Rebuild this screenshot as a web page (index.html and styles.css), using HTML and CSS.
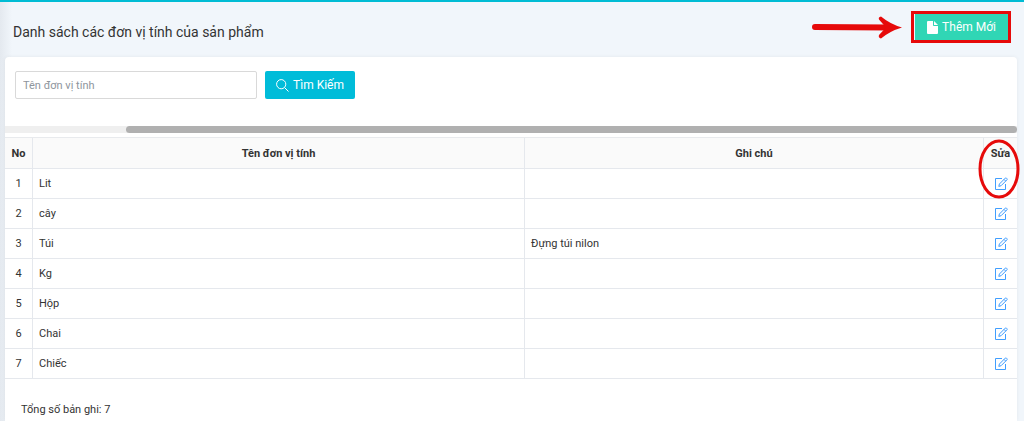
FILE: index.html
```
<!DOCTYPE html>
<html lang="vi">
<head>
  <meta charset="UTF-8">
  <meta name="viewport" content="width=device-width, initial-scale=1.0">
  <title>Đơn vị tính</title>
  <link rel="stylesheet" href="styles.css">
</head>
<body>
  <!-- Shared pencil icon for the edit links -->
  <svg class="icon-defs" aria-hidden="true">
    <symbol id="icon-edit" viewBox="0 0 14 14">
      <path d="M8 1.5H1.5V12.5H11.5V7" />
      <path d="M4.8 9.4L5.4 7L11.3 1.1Q11.9 0.6 12.5 1.2L13 1.7Q13.5 2.3 12.9 2.9L7.1 8.7L4.8 9.4Z" />
      <path d="M10 2.4L11.7 4.1" />
    </symbol>
  </svg>

  <!-- Page title and add button -->
  <header class="page-header">
    <h1>Danh sách các đơn vị tính của sản phẩm</h1>
    <div class="header-actions">
      <svg class="arrow" viewBox="0 0 90 24" aria-hidden="true">
        <path class="arrow-line" d="M3 12L76 12.5" />
        <path class="arrow-head" d="M69 1.5Q78 9 90 12.5Q78 16 69 23.5Q66 22.5 67 20L74 12.5L67 4.5Q66 2 69 1.5Z" />
      </svg>
      <span class="highlight">
        <button type="button" class="btn btn-add">
          <svg class="icon-file" viewBox="0 0 11 13" aria-hidden="true">
            <path d="M1 0H6V4.2Q6 5 6.8 5H11V12Q11 13 10 13H1Q0 13 0 12V1Q0 0 1 0ZM7 0L11 4H7Z" />
          </svg>
          Thêm Mới
        </button>
      </span>
    </div>
  </header>

  <main class="card">
    <!-- Search form -->
    <form class="search-form">
      <input type="text" class="search-input" placeholder="Tên đơn vị tính" aria-label="Tên đơn vị tính">
      <button type="button" class="btn btn-search">
        <svg class="icon-search" viewBox="0 0 13 13" aria-hidden="true">
          <circle cx="5.2" cy="5.2" r="4.6" />
          <path d="M8.5 8.5L12.5 12.5" />
        </svg>
        Tìm Kiếm
      </button>
    </form>

    <!-- Horizontal scroll bar above the table -->
    <div class="scroll-track">
      <div class="scroll-thumb"></div>
    </div>

    <table class="unit-table">
      <thead>
        <tr>
          <th class="col-no">No</th>
          <th class="col-name">Tên đơn vị tính</th>
          <th>Ghi chú</th>
          <th class="col-edit">Sửa
            <svg class="circle-mark" viewBox="0 0 42 60" aria-hidden="true">
              <ellipse cx="21" cy="30" rx="19" ry="28" />
            </svg>
          </th>
        </tr>
      </thead>
      <tbody>
        <tr>
          <td class="col-no">1</td><td>Lit</td><td></td>
          <td class="col-edit"><a href="#" aria-label="Sửa Lit"><svg class="icon-edit"><use href="#icon-edit" /></svg></a></td>
        </tr>
        <tr>
          <td class="col-no">2</td><td>cây</td><td></td>
          <td class="col-edit"><a href="#" aria-label="Sửa cây"><svg class="icon-edit"><use href="#icon-edit" /></svg></a></td>
        </tr>
        <tr>
          <td class="col-no">3</td><td>Túi</td><td>Đựng túi nilon</td>
          <td class="col-edit"><a href="#" aria-label="Sửa Túi"><svg class="icon-edit"><use href="#icon-edit" /></svg></a></td>
        </tr>
        <tr>
          <td class="col-no">4</td><td>Kg</td><td></td>
          <td class="col-edit"><a href="#" aria-label="Sửa Kg"><svg class="icon-edit"><use href="#icon-edit" /></svg></a></td>
        </tr>
        <tr>
          <td class="col-no">5</td><td>Hộp</td><td></td>
          <td class="col-edit"><a href="#" aria-label="Sửa Hộp"><svg class="icon-edit"><use href="#icon-edit" /></svg></a></td>
        </tr>
        <tr>
          <td class="col-no">6</td><td>Chai</td><td></td>
          <td class="col-edit"><a href="#" aria-label="Sửa Chai"><svg class="icon-edit"><use href="#icon-edit" /></svg></a></td>
        </tr>
        <tr>
          <td class="col-no">7</td><td>Chiếc</td><td></td>
          <td class="col-edit"><a href="#" aria-label="Sửa Chiếc"><svg class="icon-edit"><use href="#icon-edit" /></svg></a></td>
        </tr>
      </tbody>
    </table>

    <p class="total">Tổng số bản ghi: 7</p>
  </main>
</body>
</html>
```
FILE: styles.css
```
* {
  box-sizing: border-box;
}

body {
  margin: 0;
  padding: 0 7px 0 5px;
  min-height: 100vh;
  display: flex;
  flex-direction: column;
  border-top: 2px solid #00bcd4;
  background: linear-gradient(to right, #e4e9ef, #f1f6fb 12px);
  font-family: Roboto, sans-serif;
  font-size: 11px;
  color: #333;
}

.icon-defs {
  display: none;
}

/* Page header */
.page-header {
  display: flex;
  align-items: center;
  justify-content: space-between;
  height: 55px;
  padding: 0 6px 5px 8px;
}

.page-header h1 {
  margin: 0;
  padding-top: 10px;
  font-size: 14px;
  font-weight: 400;
}

.header-actions {
  display: flex;
  align-items: center;
  gap: 9px;
}

.arrow {
  width: 90px;
  height: 24px;
}

.arrow-line {
  stroke: #e60a0a;
  stroke-width: 6;
  stroke-linecap: round;
}

.arrow-head {
  fill: #e60a0a;
}

/* Red frame round the add button */
.highlight {
  display: flex;
  padding-left: 1px;
  border: 3px solid #e60a0a;
}

/* Buttons */
.btn {
  display: flex;
  align-items: center;
  justify-content: center;
  gap: 4px;
  padding: 0 12px;
  border: 0;
  color: #fff;
  font-family: Roboto, sans-serif;
  font-size: 12px;
  cursor: pointer;
}

.btn-add {
  height: 26px;
  background: #30d6b5;
}

.icon-file {
  width: 11px;
  height: 13px;
  fill: #fff;
}

.btn-search {
  height: 28px;
  padding: 0 11px;
  border-radius: 2px;
  background: #00bcd9;
}

.icon-search {
  width: 13px;
  height: 13px;
  fill: none;
  stroke: #fff;
}

/* White card */
.card {
  flex: 1;
  border-radius: 4px 4px 0 0;
  background: #fff;
  box-shadow: 0 0 4px rgba(0, 0, 0, 0.06);
}

.search-form {
  display: flex;
  gap: 8px;
  padding: 14px 10px 27px;
}

.search-input {
  width: 242px;
  height: 28px;
  padding: 0 7px;
  border: 1px solid #d9d9d9;
  border-radius: 2px;
  font-family: Roboto, sans-serif;
  font-size: 11px;
}

.search-input::placeholder {
  color: #8e959d;
}

/* Scroll bar */
.scroll-track {
  height: 7px;
  margin-bottom: 4px;
  background: #efefef;
}

.scroll-thumb {
  height: 7px;
  margin-left: 12%;
  border-radius: 4px;
  background: #b0b0b0;
}

/* Table */
.unit-table {
  width: 100%;
  table-layout: fixed;
  border-collapse: separate;
  border-spacing: 0;
  border-top: 1px solid #e8eaed;
}

.unit-table th,
.unit-table td {
  height: 30px;
  padding: 0 6px;
  border-right: 1px solid #e5e8ed;
  border-bottom: 1px solid #e5e8ed;
  text-align: left;
}

.unit-table th {
  height: 31px;
  background: #fafafa;
  font-weight: 700;
  text-align: center;
}

.unit-table th:last-child,
.unit-table td:last-child {
  border-right: 0;
}

.unit-table .col-no {
  width: 28px;
  padding: 0;
  text-align: center;
}

.unit-table .col-name {
  width: 492px;
}

.unit-table .col-edit {
  position: relative;
  width: 33px;
  padding: 0;
  text-align: center;
}

.icon-edit {
  display: block;
  width: 14px;
  height: 14px;
  margin: 0 auto;
  fill: none;
  stroke: #409eff;
}

/* Red ellipse over the first edit link */
.circle-mark {
  position: absolute;
  top: 1px;
  left: -6px;
  z-index: 1;
  width: 42px;
  height: 60px;
  fill: none;
  stroke: #e60a0a;
  stroke-width: 3;
  pointer-events: none;
}

.total {
  margin: 0;
  padding: 24px 16px 0;
}
```
